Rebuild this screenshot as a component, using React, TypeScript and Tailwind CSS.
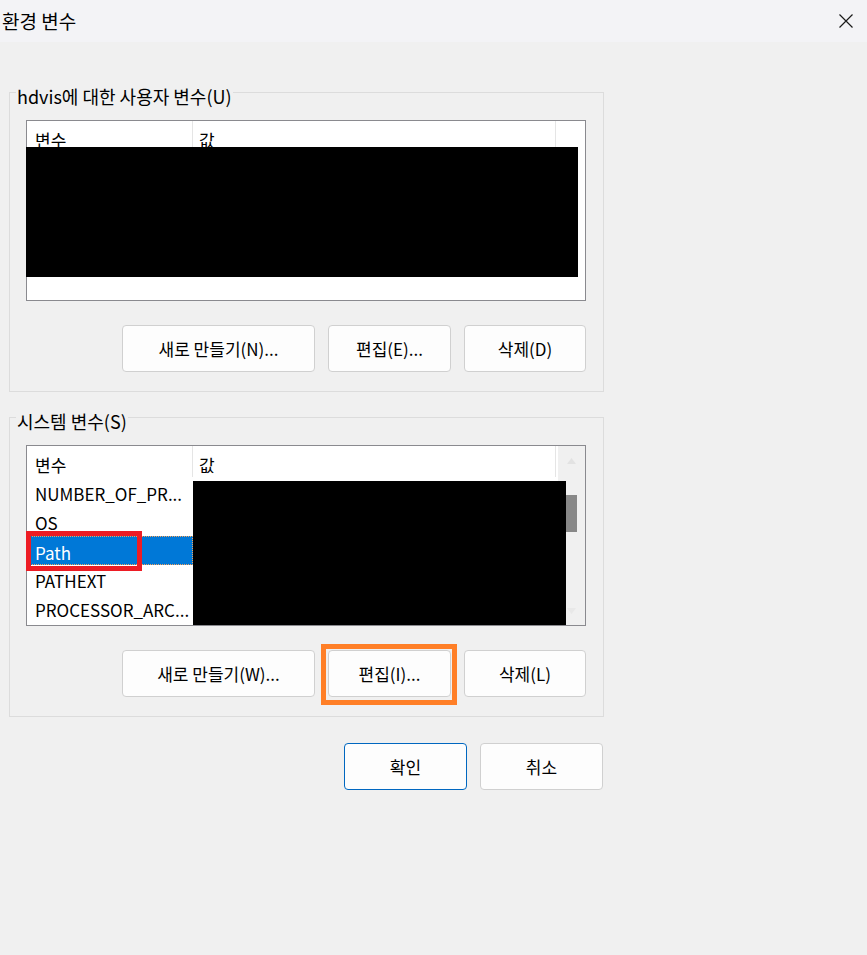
import React from "react";

const FONT = { fontFamily: '"Noto Sans CJK KR", "Noto Sans", sans-serif' };

function Btn({ label, w, focusBox }: { label: string; w: string; focusBox?: boolean }) {
  return (
    <div className={`relative ${w} h-[47px]`}>
      <div className="w-full h-full flex items-center justify-center rounded-[4px] border border-[#d0d0d0] bg-[#fdfdfd] text-[17px] text-black">
        {label}
      </div>
      {focusBox && (
        <div className="absolute -left-[7px] -right-[6px] -top-[6px] -bottom-[8px] border-[5px] border-[#ff7f27]" />
      )}
    </div>
  );
}

function Header() {
  return (
    <div className="flex h-[32px] text-[17px] text-black">
      <div className="w-[166px] pl-[8px] pt-[5px] leading-[27px] border-r border-[#e5e5e5] h-[31px]">변수</div>
      <div className="w-[363px] pl-[6px] pt-[5px] leading-[27px] border-r border-[#e5e5e5] h-[31px]">값</div>
      <div className="flex-1" />
    </div>
  );
}

function Group({
  legend,
  children,
  buttons,
  editFocus,
}: {
  legend: string;
  children: React.ReactNode;
  buttons: [string, string, string];
  editFocus?: boolean;
}) {
  return (
    <div className="relative w-[595px] border border-[#dcdcdc] pt-[27px] pb-[19px] pl-[16px]">
      <span className="absolute left-[6px] -top-[9px] leading-[24px] px-[1px] bg-[#f0f0f0] text-[18px] text-black">
        {legend}
      </span>
      {children}
      <div className="w-[560px] flex justify-end gap-[13px] mt-[24px]">
        <Btn label={buttons[0]} w="w-[193px]" />
        <Btn label={buttons[1]} w="w-[123px]" focusBox={editFocus} />
        <Btn label={buttons[2]} w="w-[122px]" />
      </div>
    </div>
  );
}

const rows = ["NUMBER_OF_PR...", "OS", "Path", "PATHEXT", "PROCESSOR_ARC..."];

export default function App() {
  return (
    <div className="w-[867px] h-[955px] bg-[#f0f0f0] overflow-hidden" style={FONT}>
      <div className="h-[42px] bg-[#f3f3f6] flex items-center justify-between pl-[2px] pr-[13px]">
        <span className="text-[19px] text-black leading-none pb-[2px]">환경 변수</span>
        <svg width="16" height="16" viewBox="0 0 16 16">
          <path d="M1.5 1.5 L14.5 14.5 M14.5 1.5 L1.5 14.5" stroke="#1a1a1a" strokeWidth="1.2" fill="none" />
        </svg>
      </div>
      <div className="pl-[9px] pt-[50px]">
        <Group legend="hdvis에 대한 사용자 변수(U)" buttons={["새로 만들기(N)...", "편집(E)...", "삭제(D)"]}>
          <div className="relative w-[560px] h-[181px] border border-[#8a8a8f] bg-white">
            <Header />
            <div className="absolute -left-[1px] top-[26px] w-[552px] h-[130px] bg-black" />
          </div>
        </Group>

        <div className="h-[25px]" />

        <Group legend="시스템 변수(S)" buttons={["새로 만들기(W)...", "편집(I)...", "삭제(L)"]} editFocus>
          <div className="relative w-[560px] h-[181px] border border-[#8a8a8f] bg-white flex">
            <div className="w-[531px]">
              <Header />
              {rows.map((r) => {
                const sel = r === "Path";
                return (
                  <div key={r} className="relative flex h-[29px] text-[17px]">
                    <div
                      className={`w-[166px] pl-[7px] pt-[3px] leading-[25px] ${
                        sel ? "bg-[#0078d7] text-white border border-dotted border-[#f5a25c]" : "text-black pl-[8px]"
                      }`}
                    >
                      {r}
                    </div>
                    <div className={`flex-1 ${sel ? "bg-[#0078d7]" : ""}`} />
                    {sel && (
                      <div className="absolute -left-[1px] -top-[5px] w-[116px] h-[40px] border-[5px] border-[#ed1c24]" />
                    )}
                  </div>
                );
              })}
            </div>
            <div className="relative flex-1 bg-[#f0f0f0]">
              <svg className="absolute left-[9px] top-[12px]" width="9" height="6" viewBox="0 0 9 6">
                <path d="M0 6 L4.5 0 L9 6 Z" fill="#e2e2e2" />
              </svg>
              <div className="absolute left-[8px] top-[49px] w-[11px] h-[37px] bg-[#888888]" />
              <svg className="absolute left-[9px] top-[162px]" width="9" height="6" viewBox="0 0 9 6">
                <path d="M0 0 L4.5 6 L9 0 Z" fill="#e8e8e8" />
              </svg>
            </div>
            <div className="absolute left-[166px] top-[35px] w-[373px] h-[144px] bg-black" />
          </div>
        </Group>

        <div className="w-[594px] flex justify-end gap-[13px] mt-[26px]">
          <div className="w-[123px] h-[47px] flex items-center justify-center rounded-[4px] border border-[#0067c0] bg-[#fdfdfd] text-[17px] text-black">
            확인
          </div>
          <div className="w-[123px] h-[47px] flex items-center justify-center rounded-[4px] border border-[#d0d0d0] bg-[#fdfdfd] text-[17px] text-black">
            취소
          </div>
        </div>
      </div>
    </div>
  );
}
